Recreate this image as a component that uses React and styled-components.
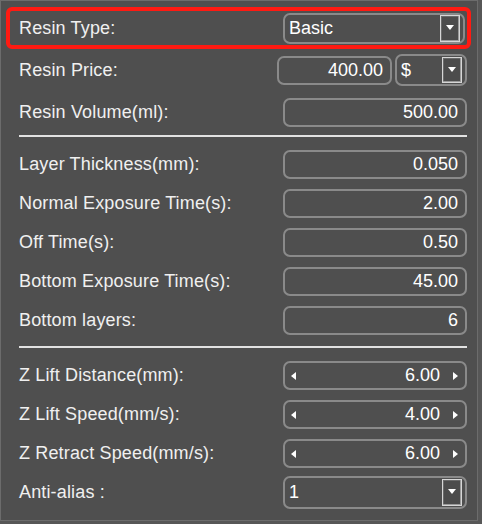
import React from 'react';
import styled, { createGlobalStyle, css } from 'styled-components';

const GlobalStyle = createGlobalStyle`
  html, body {
    margin: 0;
    padding: 0;
    background: #575757;
  }
  body {
    font-family: "Liberation Sans", Arial, sans-serif;
  }
`;

const Panel = styled.div`
  box-sizing: border-box;
  width: 478px;
  height: 521px;
  background: #4f4f4f;
  border: 1px solid #6c6c6c;
  padding: 6px 6px 0 5px;
  display: flex;
  flex-direction: column;
`;

const Row = styled.div`
  box-sizing: border-box;
  display: flex;
  align-items: center;
  justify-content: space-between;
  height: ${({ h }) => h || 39}px;
  margin-top: ${({ mt }) => mt || 0}px;
  padding: 0 4px 0 13px;
  ${({ highlight }) =>
    highlight &&
    css`
      border: 4px solid #ff1a12;
      border-radius: 6px;
      padding: 0 2px 0 9px;
    `}
`;

const Label = styled.span`
  font-size: 18px;
  letter-spacing: 0.15px;
  color: #f0f0f0;
  white-space: nowrap;
`;

const Divider = styled.div`
  height: 2px;
  background: #e2e2e2;
  margin: ${({ mt }) => mt}px 4px 0 13px;
`;

const Box = styled.div`
  box-sizing: border-box;
  width: ${({ w }) => w || 184}px;
  height: ${({ h }) => h || 29}px;
  border: 2px solid #8a8a8a;
  border-radius: 7px;
  display: flex;
  align-items: center;
  padding: 0 7px 0 4px;
  color: #ffffff;
  font-size: 18px;
`;

const Value = styled.span`
  flex: 1;
  text-align: ${({ left }) => (left ? 'left' : 'right')};
  white-space: nowrap;
`;

const Controls = styled.div`
  display: flex;
  gap: 3px;
  align-items: center;
`;

const DropButton = styled.div`
  box-sizing: border-box;
  width: 20px;
  height: ${({ h }) => h || 27}px;
  margin-right: -4px;
  border: 1px solid #d6d6d6;
  box-shadow: inset -1px -1px 0 #9a9a9a, inset 1px 1px 0 #6a6a6a;
  background: #4c4c4c;
  display: flex;
  justify-content: center;
  padding-top: 9px;

  &::after {
    content: '';
    width: 0;
    height: 0;
    border-left: 4px solid transparent;
    border-right: 4px solid transparent;
    border-top: 5px solid #ffffff;
  }
`;

const Arrow = styled.span`
  width: 0;
  height: 0;
  border-top: 4px solid transparent;
  border-bottom: 4px solid transparent;
  ${({ dir }) =>
    dir === 'left'
      ? css`
          border-right: 5px solid #ffffff;
          margin-left: 2px;
        `
      : css`
          border-left: 5px solid #ffffff;
          margin-left: 13px;
          margin-right: 0;
        `}
`;

const Spacer = styled.div`
  height: ${({ h }) => h}px;
`;

const Select = ({ value, w, h, btnH }) => (
  <Box w={w} h={h}>
    <Value left>{value}</Value>
    <DropButton h={btnH} />
  </Box>
);

const Spinner = ({ value }) => (
  <Box>
    <Arrow dir="left" />
    <Value>{value}</Value>
    <Arrow dir="right" />
  </Box>
);

const materialRows = [
  { label: 'Layer Thickness(mm):', value: '0.050' },
  { label: 'Normal Exposure Time(s):', value: '2.00' },
  { label: 'Off Time(s):', value: '0.50' },
  { label: 'Bottom Exposure Time(s):', value: '45.00' },
  { label: 'Bottom layers:', value: '6' },
];

const motionRows = [
  { label: 'Z Lift Distance(mm):', value: '6.00' },
  { label: 'Z Lift Speed(mm/s):', value: '4.00' },
  { label: 'Z Retract Speed(mm/s):', value: '6.00' },
];

export default function App() {
  return (
    <>
      <GlobalStyle />
      <Panel>
        <Row highlight h={42}>
          <Label>Resin Type:</Label>
          <Select value="Basic" w={182} h={31} btnH={27} />
        </Row>
        <Row h={40} mt={1}>
          <Label>Resin Price:</Label>
          <Controls>
            <Box w={115}>
              <Value>400.00</Value>
            </Box>
            <Select value="$" w={72} h={32} btnH={26} />
          </Controls>
        </Row>
        <Row h={40} mt={2}>
          <Label>Resin Volume(ml):</Label>
          <Box>
            <Value>500.00</Value>
          </Box>
        </Row>

        <Divider mt={3} />

        <Spacer h={8} />
        {materialRows.map((r) => (
          <Row key={r.label}>
            <Label>{r.label}</Label>
            <Box>
              <Value>{r.value}</Value>
            </Box>
          </Row>
        ))}

        <Divider mt={6} />

        <Spacer h={8} />
        {motionRows.map((r) => (
          <Row key={r.label}>
            <Label>{r.label}</Label>
            <Spinner value={r.value} />
          </Row>
        ))}
        <Row>
          <Label>Anti-alias :</Label>
          <Select value="1" h={33} btnH={27} />
        </Row>
      </Panel>
    </>
  );
}
